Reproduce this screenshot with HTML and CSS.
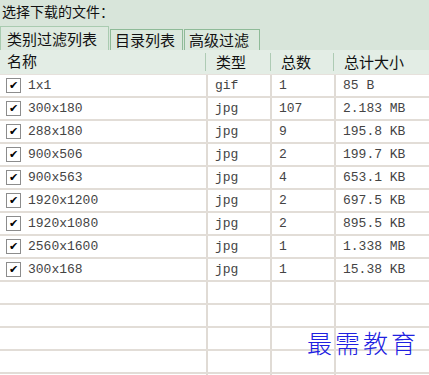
FILE: index.html
```html
<!DOCTYPE html>
<html>
<head>
<meta charset="utf-8">
<link rel="stylesheet" href="styles.css">
</head>
<body>
<div class="win">
  <div class="title">选择下载的文件：</div>
  <div class="tabs">
    <div class="tab active">类别过滤列表</div>
    <div class="tab">目录列表</div>
    <div class="tab">高级过滤</div>
  </div>
  <div class="header">
    <div class="hc">名称</div>
    <div class="hc sep">类型</div>
    <div class="hc sep">总数</div>
    <div class="hc sep">总计大小</div>
  </div>
  <div class="rows">
    <div class="row"><div class="c name"><span class="cb">✔</span>1x1</div><div class="c">gif</div><div class="c">1</div><div class="c">85 B</div></div>
    <div class="row"><div class="c name"><span class="cb">✔</span>300x180</div><div class="c">jpg</div><div class="c">107</div><div class="c">2.183 MB</div></div>
    <div class="row"><div class="c name"><span class="cb">✔</span>288x180</div><div class="c">jpg</div><div class="c">9</div><div class="c">195.8 KB</div></div>
    <div class="row"><div class="c name"><span class="cb">✔</span>900x506</div><div class="c">jpg</div><div class="c">2</div><div class="c">199.7 KB</div></div>
    <div class="row"><div class="c name"><span class="cb">✔</span>900x563</div><div class="c">jpg</div><div class="c">4</div><div class="c">653.1 KB</div></div>
    <div class="row"><div class="c name"><span class="cb">✔</span>1920x1200</div><div class="c">jpg</div><div class="c">2</div><div class="c">697.5 KB</div></div>
    <div class="row"><div class="c name"><span class="cb">✔</span>1920x1080</div><div class="c">jpg</div><div class="c">2</div><div class="c">895.5 KB</div></div>
    <div class="row"><div class="c name"><span class="cb">✔</span>2560x1600</div><div class="c">jpg</div><div class="c">1</div><div class="c">1.338 MB</div></div>
    <div class="row"><div class="c name"><span class="cb">✔</span>300x168</div><div class="c">jpg</div><div class="c">1</div><div class="c">15.38 KB</div></div>
    <div class="row"><div class="c"></div><div class="c"></div><div class="c"></div><div class="c"></div></div>
    <div class="row"><div class="c"></div><div class="c"></div><div class="c"></div><div class="c"></div></div>
    <div class="row"><div class="c"></div><div class="c"></div><div class="c"></div><div class="c"></div></div>
    <div class="row"><div class="c"></div><div class="c"></div><div class="c"></div><div class="c"></div></div>
    <div class="row"><div class="c"></div><div class="c"></div><div class="c"></div><div class="c"></div></div>
  </div>
  <div class="watermark">最需教育</div>
</div>
</body>
</html>
```

FILE: styles.css
```css
html, body {
  margin: 0;
  padding: 0;
  background: #d8e5da;
}
.win {
  position: relative;
  width: 429px;
  height: 375px;
  overflow: hidden;
  font-family: "Noto Sans CJK SC", "Noto Sans", sans-serif;
  color: #111;
}
.title {
  height: 26px;
  line-height: 22px;
  padding-left: 2px;
  font-size: 14px;
}
.tabs {
  display: flex;
  align-items: flex-end;
  height: 24px;
}
.tab {
  line-height: 19px;
  font-size: 15px;
  padding: 0 4px;
  border: 1px solid #8fbb98;
  border-bottom: none;
  margin-left: 1px;
  background: #dbe8dd;
  box-sizing: border-box;
  height: 21px;
}
.tab.active {
  height: 24px;
  line-height: 24px;
  margin-left: 0;
  padding: 0 3px 0 6px;
  width: 109px;
  background: #dde9df;
  border-color: #a9cbb0;
}
.tab:nth-child(2) { width: 73px; }
.tab:nth-child(3) { width: 76px; }
.header {
  display: grid;
  grid-template-columns: 205px 65px 63px 96px;
  height: 24px;
  background: #e3ede5;
  font-size: 15px;
  line-height: 22px;
}
.hc {
  padding-left: 7px;
}
.hc.sep {
  padding-left: 10px;
  border-left: 1px solid #aecbb4;
  margin: 3px 0;
  line-height: 17px;
}
.rows {
  background: #fff;
  border-top: 1px solid #e6e1dc;
}
.row {
  display: grid;
  grid-template-columns: 208px 64px 64px 93px;
  height: 23px;
  box-sizing: border-box;
  border-bottom: 2px solid #e2ddd7;
  font-family: "Liberation Mono", "DejaVu Sans Mono", monospace;
  font-size: 13px;
  line-height: 21px;
  color: #444;
}
.c {
  padding-left: 7px;
  border-right: 2px solid #e0dbd5;
  white-space: nowrap;
  display: flex;
  align-items: center;
}
.c:last-child {
  border-right: none;
}
.c.name {
  padding-left: 6px;
}
.cb {
  display: inline-flex;
  align-items: center;
  justify-content: center;
  width: 13px;
  height: 13px;
  border: 1px solid #8c8c8c;
  background: #fff;
  margin-right: 7px;
  font-family: "DejaVu Sans", sans-serif;
  font-size: 11px;
  line-height: 13px;
  color: #000;
  font-weight: bold;
}
.watermark {
  position: absolute;
  left: 307px;
  top: 326px;
  font-size: 25px;
  line-height: 32px;
  color: #2020e0;
  letter-spacing: 3px;
  font-weight: 300;
  font-family: "Noto Sans CJK SC", serif;
}
```
